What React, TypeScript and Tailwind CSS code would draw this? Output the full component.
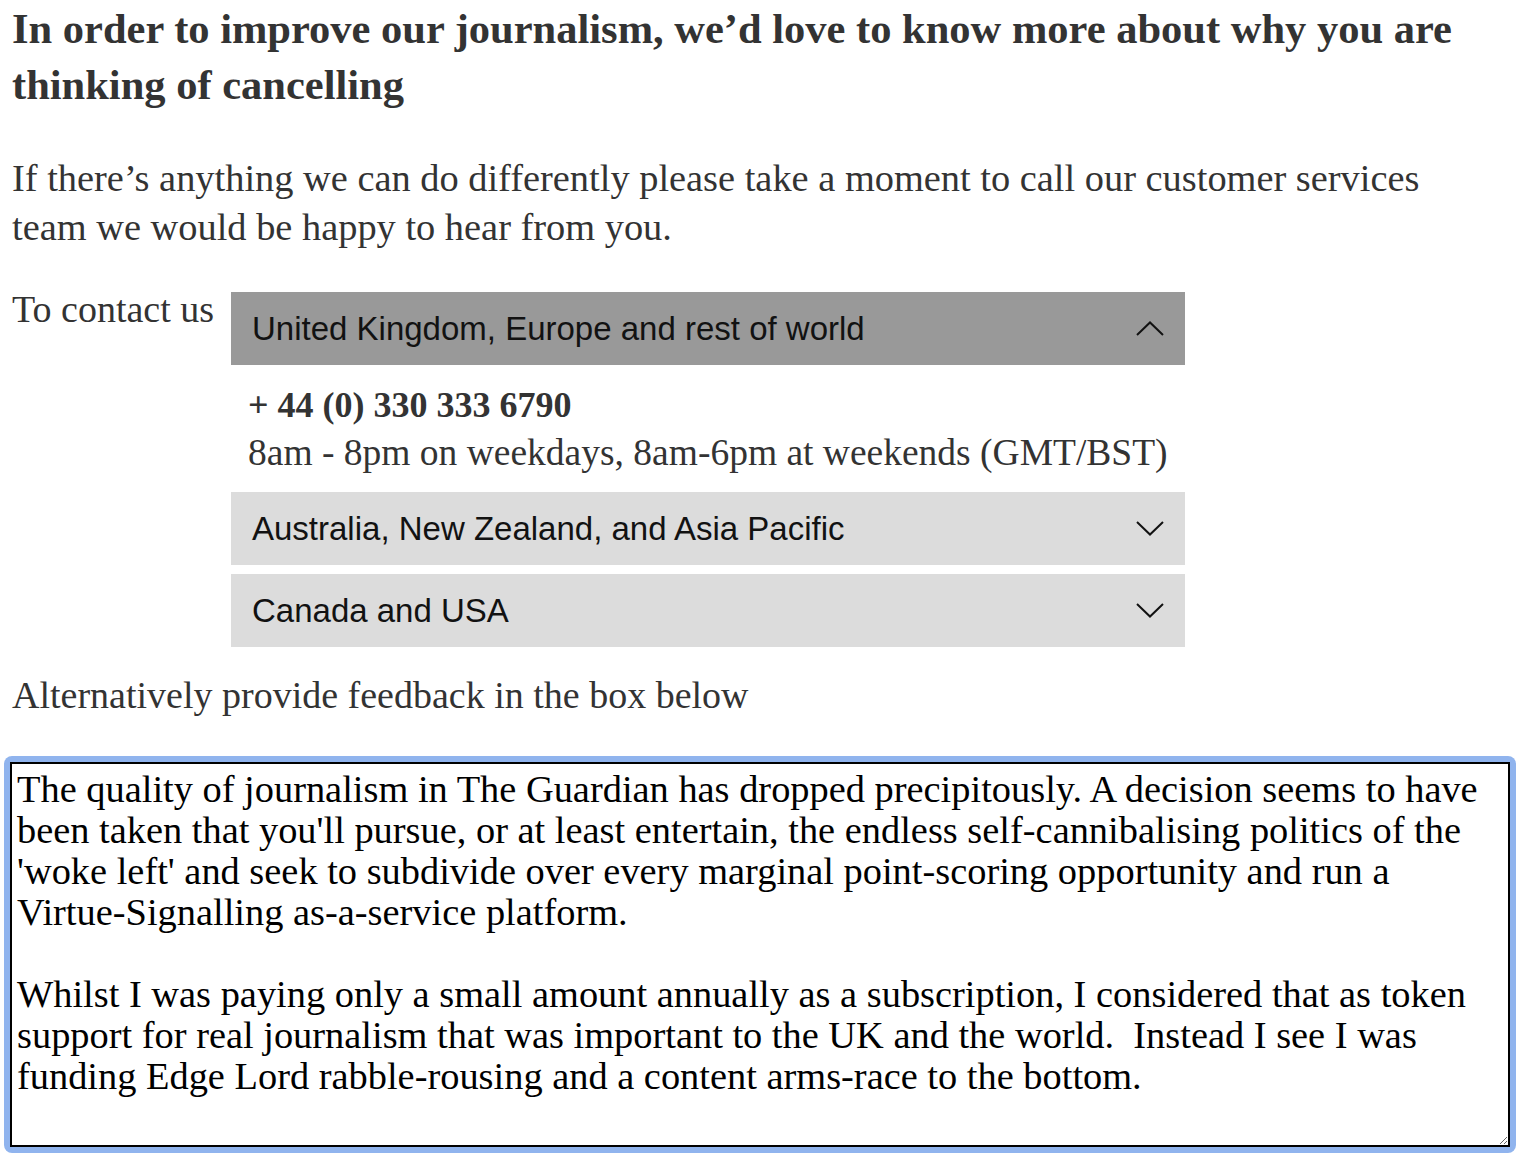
import React from "react";

const feedback =
  "The quality of journalism in The Guardian has dropped precipitously. A decision seems to have been taken that you'll pursue, or at least entertain, the endless self-cannibalising politics of the 'woke left' and seek to subdivide over every marginal point-scoring opportunity and run a Virtue-Signalling as-a-service platform.\n\nWhilst I was paying only a small amount annually as a subscription, I considered that as token support for real journalism that was important to the UK and the world.  Instead I see I was funding Edge Lord rabble-rousing and a content arms-race to the bottom.";

function Chevron({ up }: { up?: boolean }) {
  return (
    <svg width="28" height="15" viewBox="0 0 28 15" fill="none" className="shrink-0">
      {up ? (
        <polyline points="1,14 14,1.5 27,14" stroke="#121212" strokeWidth="2" />
      ) : (
        <polyline points="1,1 14,13.5 27,1" stroke="#121212" strokeWidth="2" />
      )}
    </svg>
  );
}

function AccordionHeader({ label, open }: { label: string; open?: boolean }) {
  return (
    <div
      className={`flex h-[73px] items-center justify-between pl-[21px] pr-[21px] ${
        open ? "bg-[#999999]" : "bg-[#dcdcdc]"
      }`}
    >
      <span className="font-['Liberation_Sans',Arial,sans-serif] text-[33px] text-[#121212]">
        {label}
      </span>
      <Chevron up={open} />
    </div>
  );
}

export default function App() {
  return (
    <div className="min-h-[1162px] w-[1518px] bg-white font-['Liberation_Serif',serif] text-[#333333]">
      <div className="pl-[12px]">
        <div className="w-[1460px]">
          <h1 className="pt-[1px] text-[42.5px] font-bold leading-[56px]">
            In order to improve our journalism, we’d love to know more about why you are thinking of
            cancelling
          </h1>
          <p className="mt-[41px] text-[38.4px] leading-[49px]">
            If there’s anything we can do differently please take a moment to call our customer
            services team we would be happy to hear from you.
          </p>
        </div>

        <div className="mt-[33px] flex">
          <div className="w-[219px] shrink-0 text-[38px] leading-[49px]">To contact us</div>
          <div className="mt-[7px] w-[954px]">
            <AccordionHeader label="United Kingdom, Europe and rest of world" open />
            <div className="pl-[17px] pt-[16px] pb-[15px]">
              <div className="text-[36px] font-bold leading-[48px]">+ 44 (0) 330 333 6790</div>
              <div className="text-[37.5px] leading-[48px]">
                8am - 8pm on weekdays, 8am-6pm at weekends (GMT/BST)
              </div>
            </div>
            <AccordionHeader label="Australia, New Zealand, and Asia Pacific" />
            <div className="mt-[9px]">
              <AccordionHeader label="Canada and USA" />
            </div>
          </div>
        </div>

        <p className="mt-[24px] text-[38px] leading-[49px]">
          Alternatively provide feedback in the box below
        </p>
      </div>

      <div className="ml-[4px] mt-[36px] w-[1512px] rounded-[8px] bg-[#90b4ee] p-[6px]">
        <textarea
          defaultValue={feedback}
          className="block h-[385px] w-[1500px] border-2 border-black bg-white pl-[5px] pr-[16px] pt-[5px] font-['Liberation_Serif',serif] text-[38.4px] leading-[41px] text-black outline-none"
        />
      </div>
    </div>
  );
}
